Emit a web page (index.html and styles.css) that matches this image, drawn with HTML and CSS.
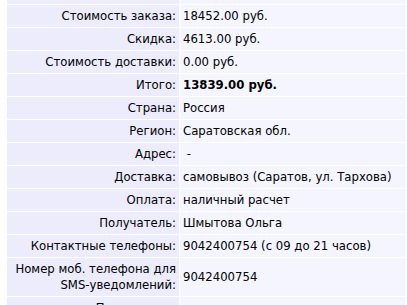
FILE: index.html
```html
<!DOCTYPE html>
<html lang="ru">
<head>
<meta charset="utf-8">
<link rel="stylesheet" href="styles.css">
</head>
<body>
<div class="viewport">
<table class="order">
  <tr><td class="label">Дата заказа:</td><td class="value"><a class="link" href="#">подробнее о заказе</a></td></tr>
  <tr><td class="label">Стоимость заказа:</td><td class="value">18452.00 руб.</td></tr>
  <tr><td class="label">Скидка:</td><td class="value">4613.00 руб.</td></tr>
  <tr><td class="label">Стоимость доставки:</td><td class="value">0.00 руб.</td></tr>
  <tr><td class="label">Итого:</td><td class="value"><b>13839.00 руб.</b></td></tr>
  <tr><td class="label">Страна:</td><td class="value">Россия</td></tr>
  <tr><td class="label">Регион:</td><td class="value">Саратовская обл.</td></tr>
  <tr><td class="label">Адрес:</td><td class="value">&nbsp;-</td></tr>
  <tr><td class="label">Доставка:</td><td class="value">самовывоз (Саратов, ул. Тархова)</td></tr>
  <tr><td class="label">Оплата:</td><td class="value">наличный расчет</td></tr>
  <tr><td class="label">Получатель:</td><td class="value">Шмытова Ольга</td></tr>
  <tr><td class="label">Контактные телефоны:</td><td class="value">9042400754 (с 09 до 21 часов)</td></tr>
  <tr><td class="label">Номер моб. телефона для SMS-уведомлений:</td><td class="value">9042400754</td></tr>
  <tr><td class="label">Примечание:</td><td class="value">&nbsp;</td></tr>
</table>
</div>
</body>
</html>
```

FILE: styles.css
```css
html, body {
  margin: 0;
  padding: 0;
  background: #ffffff;
  overflow: hidden;
}
.viewport {
  padding-left: 6px;
  margin-top: -19px;
}
.order {
  width: 401px;
  border-collapse: separate;
  border-spacing: 1px;
  font-family: "DejaVu Sans", Verdana, sans-serif;
  font-size: 11.7px;
  line-height: 16px;
  color: #000000;
}
.order td {
  padding: 3px 3px;
  vertical-align: middle;
}
.label {
  width: 166px;
  background: #ececfc;
  text-align: right;
}
.value {
  background: #f5f5ff;
  text-align: left;
}
.link {
  color: #7a1fd0;
  text-decoration: underline;
}
```
